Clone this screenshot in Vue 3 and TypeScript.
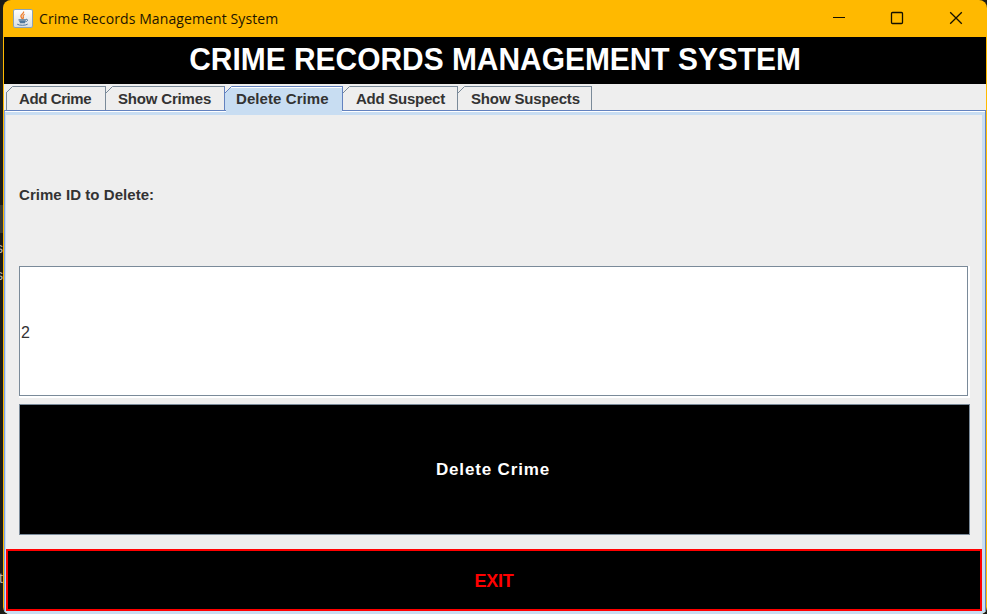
<script setup lang="ts">
import { ref } from 'vue'

interface Tab {
  id: string
  label: string
  width: number
}

const tabs: Tab[] = [
  { id: 'add-crime', label: 'Add Crime', width: 100 },
  { id: 'show-crimes', label: 'Show Crimes', width: 119 },
  { id: 'delete-crime', label: 'Delete Crime', width: 118 },
  { id: 'add-suspect', label: 'Add Suspect', width: 115 },
  { id: 'show-suspects', label: 'Show Suspects', width: 134 },
]

const active = ref<string>('delete-crime')
const crimeId = ref<string>('2')
</script>

<template>
  <div class="desktop">
    <div class="backdrop">
      <i class="line-mark"></i>
      <span class="frag frag-a">s</span>
      <span class="frag frag-b">s</span>
      <span class="frag frag-c">t</span>
    </div>
    <div class="window">
      <header class="titlebar">
        <svg class="java" width="20" height="20" viewBox="0 0 20 20">
          <defs>
            <linearGradient id="tile" x1="0" y1="0" x2="0" y2="1">
              <stop offset="0" stop-color="#ffffff" />
              <stop offset="1" stop-color="#d8dde2" />
            </linearGradient>
          </defs>
          <rect x="0.5" y="0.5" width="19" height="18" rx="1.5" fill="url(#tile)" stroke="#8aa3b8" />
          <path d="M10.5 2.500c1.200 1.800-3 3-2.600 4.900 .2 1 1.300 1.500 1.200 2.600M11.600 5.200c-2.600 1.400-1.300 2.300-1.200 3.400 0 .5-.3 1-.8 1.400" fill="none" stroke="#ee7f2f" stroke-width="1.300" />
          <path d="M5.500 10.800h7.500M6.300 12.300h6.200M6.800 13.700h5.200" fill="none" stroke="#50779b" stroke-width="1.300" />
          <path d="M13 10.300c2.300-.4 2 2.100-.6 2.600M4.200 15.200c2 1.500 8.600 1.400 10.500-.1" fill="none" stroke="#50779b" stroke-width="1" />
        </svg>
        <span class="caption">Crime Records Management System</span>
        <div class="controls">
          <svg width="14" height="14" viewBox="0 0 14 14"><path class="thin" d="M2 6.500h12" /></svg>
          <svg width="14" height="14" viewBox="0 0 14 14"><rect x="1.500" y="1.500" width="11" height="11" rx="1" /></svg>
          <svg width="14" height="14" viewBox="0 0 14 14"><path d="M1.200 1.200l11.600 11.600M12.800 1.200L1.200 12.800" /></svg>
        </div>
      </header>
      <div class="body">
        <h1 class="banner"><span>CRIME RECORDS MANAGEMENT SYSTEM</span></h1>
        <nav class="tabs">
          <button
            v-for="tab in tabs"
            :key="tab.id"
            type="button"
            class="tab"
            :class="[tab.id, { active: tab.id === active }]"
            :style="{ width: tab.width + 'px' }"
            @click="active = tab.id"
          >
            <svg class="corner" width="7" height="8" viewBox="0 0 7 8">
              <path class="cut" d="M0 0h7L0 7z" />
              <path class="edge" d="M0 7L6.500 .500" />
            </svg>
            <span>{{ tab.label }}</span>
          </button>
        </nav>
        <main class="pane">
          <form class="form" @submit.prevent>
            <label class="label" for="crime-id">Crime ID to Delete:</label>
            <div class="field"><input id="crime-id" v-model="crimeId" type="text" /></div>
            <button class="delete" type="submit"><span>Delete Crime</span></button>
          </form>
          <button class="exit" type="button"><span>EXIT</span></button>
        </main>
      </div>
    </div>
  </div>
</template>

<style>
html,
body {
  margin: 0;
  overflow: hidden;
}
</style>

<style scoped>
.desktop {
  display: flex;
  width: 987px;
  height: 614px;
  background: #1b1c18;
  font-family: "Liberation Sans", Arial, sans-serif;
}
.desktop * {
  box-sizing: border-box;
}
.backdrop {
  position: relative;
  width: 3px;
  overflow: hidden;
}
.line-mark {
  position: absolute;
  top: 205px;
  left: 0;
  width: 3px;
  height: 28px;
  background: #383a34;
}
.frag {
  position: absolute;
  left: -4px;
  color: #b5b5b0;
  font: 14px/16px "Liberation Sans", sans-serif;
}
.frag-a { top: 240px; }
.frag-b { top: 267px; }
.frag-c { top: 570px; left: -1px; }
.window {
  display: flex;
  flex-direction: column;
  width: 984px;
  height: 614px;
  padding: 0 1px;
  overflow: hidden;
  border-radius: 8px 8px 7px 7px;
  background: #ffb900;
}
.titlebar {
  display: flex;
  align-items: center;
  flex: 0 0 37px;
  padding: 0 23px 0 9px;
}
.caption {
  margin-left: 6px;
  color: #1c1400;
  font-family: "Open Sans", "Noto Sans", sans-serif;
  font-size: 14px;
  letter-spacing: 0.1px;
  line-height: 20px;
  white-space: nowrap;
}
.controls {
  display: flex;
  gap: 45px;
  margin: 0 0 1px auto;
}
.controls svg {
  fill: none;
  stroke: #141000;
  stroke-width: 1.300;
}
.controls .thin {
  stroke-width: 1;
}
.body {
  display: flex;
  flex: 1;
  flex-direction: column;
  background: #eee;
}
.banner {
  display: flex;
  align-items: center;
  justify-content: center;
  height: 47px;
  margin: 0;
  padding-bottom: 4px;
  background: #000;
  color: #fff;
  font-size: 32px;
  line-height: 36px;
  white-space: nowrap;
}
.banner span {
  transform: scaleX(0.935);
}
.tabs {
  display: flex;
  height: 26px;
  padding: 2px 0 0 2px;
}
.tab {
  position: relative;
  height: 24px;
  padding: 0 0 0 12px;
  border: 0;
  border-top: 1px solid #7a8a99;
  border-right: 1px solid #7a8a99;
  background: #eee;
  color: #333;
  font: bold 15px/23px "Liberation Sans", Arial, sans-serif;
  text-align: left;
  white-space: nowrap;
}
.add-crime {
  border-left: 1px solid #7a8a99;
  letter-spacing: -0.4px;
}
.show-crimes {
  border-right-color: #6382bf;
  letter-spacing: -0.180px;
}
.delete-crime {
  letter-spacing: 0.08px;
}
.add-suspect {
  padding-left: 13px;
  letter-spacing: -0.25px;
}
.show-suspects {
  padding-left: 13px;
  letter-spacing: -0.15px;
}
.tab.active {
  z-index: 1;
  padding-left: 11px;
  border-color: #6382bf;
  background: #c8ddf2;
  box-shadow: inset 0 1px #fff;
}
.tab.active::after {
  content: "";
  position: absolute;
  right: 0;
  bottom: -3px;
  left: 1px;
  height: 4px;
  background: #c8ddf2;
}
.corner {
  position: absolute;
  top: -1px;
  left: 0;
}
.add-crime .corner {
  left: -1px;
}
.cut {
  fill: #eee;
}
.edge {
  fill: none;
  stroke: #7a8a99;
}
.active .edge {
  stroke: #6382bf;
}
.pane {
  display: flex;
  flex: 1;
  flex-direction: column;
  padding: 1px 3px 3px 1px;
  border-top: 1px solid #6382bf;
  border-right: 1px solid #6382bf;
  border-left: 1px solid #7d9fe0;
  background: #c8ddf2;
  box-shadow: inset 0 1px #fff;
}
.form {
  display: grid;
  flex: 1;
  grid-template-rows: 133px 132px 131px;
  row-gap: 6px;
  margin-top: 3px;
  padding: 12px 12px 14px 13px;
  background: #eee;
}
.label {
  align-self: center;
  padding-top: 2px;
  color: #333;
  font-size: 15px;
  font-weight: bold;
  letter-spacing: 0.05px;
  line-height: 18px;
}
.field {
  border-right: 2px solid #fff;
  border-bottom: 2px solid #fff;
}
.field input {
  display: block;
  width: 100%;
  height: 100%;
  margin: 0;
  padding: 3px 0 0 1px;
  border: 1px solid #7a8a99;
  border-radius: 0;
  outline: 0;
  background: #fff;
  color: #333;
  font: 16px "Liberation Sans", Arial, sans-serif;
}
.delete {
  padding: 0 3px 0 0;
  border: 1px solid #7a8a99;
  background: #000;
  color: #fff;
  font: bold 17px/20px "Liberation Sans", Arial, sans-serif;
  letter-spacing: 0.850px;
}
.exit {
  height: 62px;
  padding: 1px 0 0;
  border: 2px solid #f00;
  background: #000;
  color: #f00;
  font: bold 18px/20px "Liberation Sans", Arial, sans-serif;
}
.exit span {
  letter-spacing: -0.2px;
}
</style>
